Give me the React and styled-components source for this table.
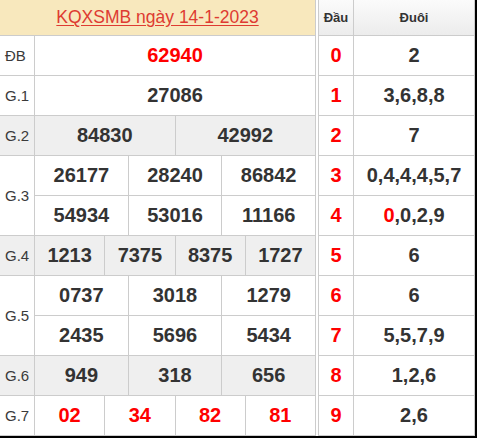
import styled, { createGlobalStyle } from "styled-components";

const GlobalStyle = createGlobalStyle`
  html, body {
    margin: 0;
    padding: 0;
    background: #fff;
  }
  body {
    font-family: "Liberation Sans", Arial, sans-serif;
    color: #333;
  }
`;

const prizes = [
  { label: "ĐB", rows: [["62940"]], special: true },
  { label: "G.1", rows: [["27086"]] },
  { label: "G.2", rows: [["84830", "42992"]], shaded: true },
  { label: "G.3", rows: [["26177", "28240", "86842"], ["54934", "53016", "11166"]] },
  { label: "G.4", rows: [["1213", "7375", "8375", "1727"]], shaded: true },
  { label: "G.5", rows: [["0737", "3018", "1279"], ["2435", "5696", "5434"]] },
  { label: "G.6", rows: [["949", "318", "656"]], shaded: true },
  { label: "G.7", rows: [["02", "34", "82", "81"]], red: true },
];

const heads = [
  { head: "0", tail: [["0", false], ["2", false]].slice(1) },
  { head: "1", tail: [["3,6,8,8", false]] },
  { head: "2", tail: [["7", false]] },
  { head: "3", tail: [["0,4,4,4,5,7", false]] },
  { head: "4", tail: [["0", true], [",0,2,9", false]] },
  { head: "5", tail: [["6", false]] },
  { head: "6", tail: [["6", false]] },
  { head: "7", tail: [["5,5,7,9", false]] },
  { head: "8", tail: [["1,2,6", false]] },
  { head: "9", tail: [["2,6", false]] },
];

const App = () => {
  return (
    <>
      <GlobalStyle />
      <Frame>
        <ResultTable>
          <TitleRow>
            <Title>KQXSMB ngày 14-1-2023</Title>
          </TitleRow>
          {prizes.map((p) => (
            <PrizeRow key={p.label} $shaded={p.shaded}>
              <Label>{p.label}</Label>
              <Values>
                {p.rows.map((r, i) => (
                  <SubRow key={i}>
                    {r.map((n, j) => (
                      <Num key={j} $red={p.special || p.red}>
                        {n}
                      </Num>
                    ))}
                  </SubRow>
                ))}
              </Values>
            </PrizeRow>
          ))}
        </ResultTable>
        <LotoTable>
          <LotoHead>
            <HeadCell>Đầu</HeadCell>
            <TailHeadCell>Đuôi</TailHeadCell>
          </LotoHead>
          {heads.map((h) => (
            <LotoRow key={h.head}>
              <HeadNum>{h.head}</HeadNum>
              <TailNum>
                {h.tail.map(([t, red], i) => (
                  <TailPart key={i} $red={red}>
                    {t}
                  </TailPart>
                ))}
              </TailNum>
            </LotoRow>
          ))}
        </LotoTable>
      </Frame>
    </>
  );
};

export default App;

const Frame = styled.div`
  display: flex;
  gap: 2px;
  width: 475px;
  height: 436px;
  border-right: 2px solid #000;
  border-bottom: 2px solid #000;
  background: #fff;
`;

const ResultTable = styled.div`
  display: flex;
  flex-direction: column;
  width: 315px;
  border-right: 1px solid #ccc;
`;

const TitleRow = styled.div`
  display: flex;
  align-items: center;
  justify-content: center;
  height: 35px;
  border-bottom: 1px solid #ccc;
  background: #f8e8bd;
`;

const Title = styled.span`
  font-size: 17.5px;
  color: #de3b32;
  text-decoration: underline;
  text-underline-offset: 2px;
`;

const PrizeRow = styled.div`
  display: flex;
  background: ${(p) => (p.$shaded ? "#efefef" : "#fff")};
`;

const Label = styled.div`
  display: flex;
  align-items: center;
  width: 29px;
  padding-left: 5px;
  border-right: 1px solid #ccc;
  border-bottom: 1px solid #ccc;
  font-size: 15px;
  color: #3a3a3a;
`;

const Values = styled.div`
  flex: 1;
  display: flex;
  flex-direction: column;
`;

const SubRow = styled.div`
  display: flex;
  height: 39px;
  border-bottom: 1px solid #ccc;
`;

const Num = styled.div`
  flex: 1;
  display: flex;
  align-items: center;
  justify-content: center;
  font-size: 20px;
  font-weight: bold;
  color: ${(p) => (p.$red ? "#f00" : "#333")};

  & + & {
    border-left: 1px solid #ccc;
  }
`;

const LotoTable = styled.div`
  display: flex;
  flex-direction: column;
  width: 155px;
  border-left: 1px solid #ccc;
  border-right: 1px solid #ccc;
`;

const LotoHead = styled.div`
  display: flex;
  height: 35px;
  border-bottom: 1px solid #ccc;
  background: linear-gradient(#fbfbfb, #ececec);
`;

const HeadCell = styled.div`
  display: flex;
  align-items: center;
  justify-content: center;
  width: 34px;
  border-right: 1px solid #ccc;
  font-size: 13px;
  font-weight: bold;
  color: #333;
`;

const TailHeadCell = styled(HeadCell)`
  flex: 1;
  border-right: none;
`;

const LotoRow = styled.div`
  display: flex;
  height: 39px;
  border-bottom: 1px solid #ccc;
`;

const HeadNum = styled.div`
  display: flex;
  align-items: center;
  justify-content: center;
  width: 34px;
  border-right: 1px solid #ccc;
  font-size: 20px;
  font-weight: bold;
  color: #f00;
`;

const TailNum = styled.div`
  flex: 1;
  display: flex;
  align-items: center;
  justify-content: center;
  font-size: 20px;
  font-weight: bold;
`;

const TailPart = styled.span`
  color: ${(p) => (p.$red ? "#f00" : "#333")};
`;
